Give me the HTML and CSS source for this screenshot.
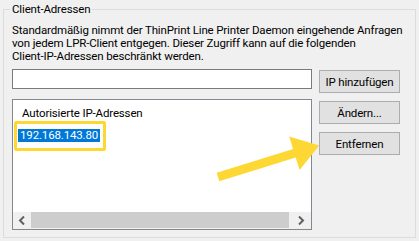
FILE: index.html
```html
<!DOCTYPE html>
<html lang="de">
<head>
    <meta charset="UTF-8">
    <title>Client-Adressen</title>
    <link rel="stylesheet" href="styles.css">
</head>
<body>
    <fieldset class="group">
        <legend>Client-Adressen</legend>
        <p class="intro">Standardmäßig nimmt der ThinPrint Line Printer Daemon eingehende Anfragen<br>von jedem LPR-Client entgegen. Dieser Zugriff kann auf die folgenden<br>Client-IP-Adressen beschränkt werden.</p>

        <div class="add-row">
            <input type="text" class="ip-input">
            <button class="btn btn-add">IP hinzufügen</button>
        </div>

        <div class="list-row">
            <div class="listbox">
                <div class="list-body">
                    <div class="list-header">Autorisierte IP-Adressen</div>
                    <div class="callout"><span class="item selected">192.168.143.80</span></div>
                </div>
                <div class="hscroll">
                    <span class="sb-arrow">
                        <svg width="8" height="9" viewBox="0 0 8 9"><path d="M6 0.5 L2 4.5 L6 8.5" fill="none" stroke="#606060" stroke-width="2"/></svg>
                    </span>
                    <span class="sb-thumb"></span>
                    <span class="sb-arrow">
                        <svg width="8" height="9" viewBox="0 0 8 9"><path d="M2 0.5 L6 4.5 L2 8.5" fill="none" stroke="#606060" stroke-width="2"/></svg>
                    </span>
                </div>
            </div>
            <div class="side-buttons">
                <button class="btn">Ändern...</button>
                <button class="btn">Entfernen</button>
            </div>
        </div>
    </fieldset>

    <!-- annotation arrow pointing at the remove button -->
    <svg class="pointer" width="419" height="241" viewBox="0 0 419 241">
        <polygon points="216.7,172.7 293.1,148.9 289.2,136.5 319.2,145.5 299.6,169.9 295.7,157.5 219.3,181.3" fill="#fdd835"/>
    </svg>
</body>
</html>
```

FILE: styles.css
```css
body {
    margin: 0;
    padding: 2px 0 0 3px;
    width: 419px;
    height: 241px;
    box-sizing: border-box;
    background-color: #f0f0f0;
    font-family: Roboto, "Liberation Sans", sans-serif;
    font-size: 11.5px;
    letter-spacing: -0.15px;
    color: #000;
    overflow: hidden;
}
.group {
    box-sizing: border-box;
    width: 413px;
    height: 236px;
    margin: 0;
    padding: 0 0 0 8px;
    border: 1px solid #dcdcdc;
}
.group legend {
    padding: 0 2px;
    margin-left: -2px;
    line-height: 14px;
}
.intro {
    margin: 8px 0 0;
    line-height: 13px;
    white-space: nowrap;
}
.add-row {
    display: flex;
    gap: 7px;
    margin-top: 6px;
}
.ip-input {
    box-sizing: border-box;
    width: 300px;
    height: 20px;
    margin: 0;
    border: 1px solid #7a7a7a;
    background: #fff;
    padding: 0 3px;
    font: inherit;
}
.btn {
    box-sizing: border-box;
    width: 81px;
    height: 23px;
    margin: 0;
    padding: 0;
    border: 1px solid #adadad;
    background-color: #e1e1e1;
    font: inherit;
    letter-spacing: inherit;
    color: #000;
}
.btn-add {
    margin-top: 1px;
}
.list-row {
    display: flex;
    gap: 7px;
    margin-top: 6px;
}
.listbox {
    box-sizing: border-box;
    width: 300px;
    height: 131px;
    border: 1px solid #828790;
    background: #fff;
    display: flex;
    flex-direction: column;
}
.list-body {
    flex: 1;
    padding: 6px 0 0 1px;
}
.list-header {
    padding-left: 8px;
    line-height: 14px;
}
.callout {
    display: inline-block;
    margin-top: 1px;
    padding: 4px 3px 6px 1px;
    border: 3px solid #fdd835;
    border-radius: 2px;
}
.item {
    display: inline-block;
    padding: 0 2px;
    line-height: 13px;
}
.selected {
    background-color: #0078d7;
    color: #fff;
}
.hscroll {
    display: flex;
    height: 17px;
    background: #f0f0f0;
}
.sb-arrow {
    width: 17px;
    display: flex;
    align-items: center;
    justify-content: center;
}
.sb-arrow:last-child {
    width: 21px;
}
.sb-thumb {
    flex: 1;
    background: #cdcdcd;
    margin: 0 1px 1px 1px;
}
.side-buttons {
    display: flex;
    flex-direction: column;
    gap: 8px;
    padding-top: 2px;
}
.pointer {
    position: absolute;
    left: 0;
    top: 0;
    pointer-events: none;
}
```
